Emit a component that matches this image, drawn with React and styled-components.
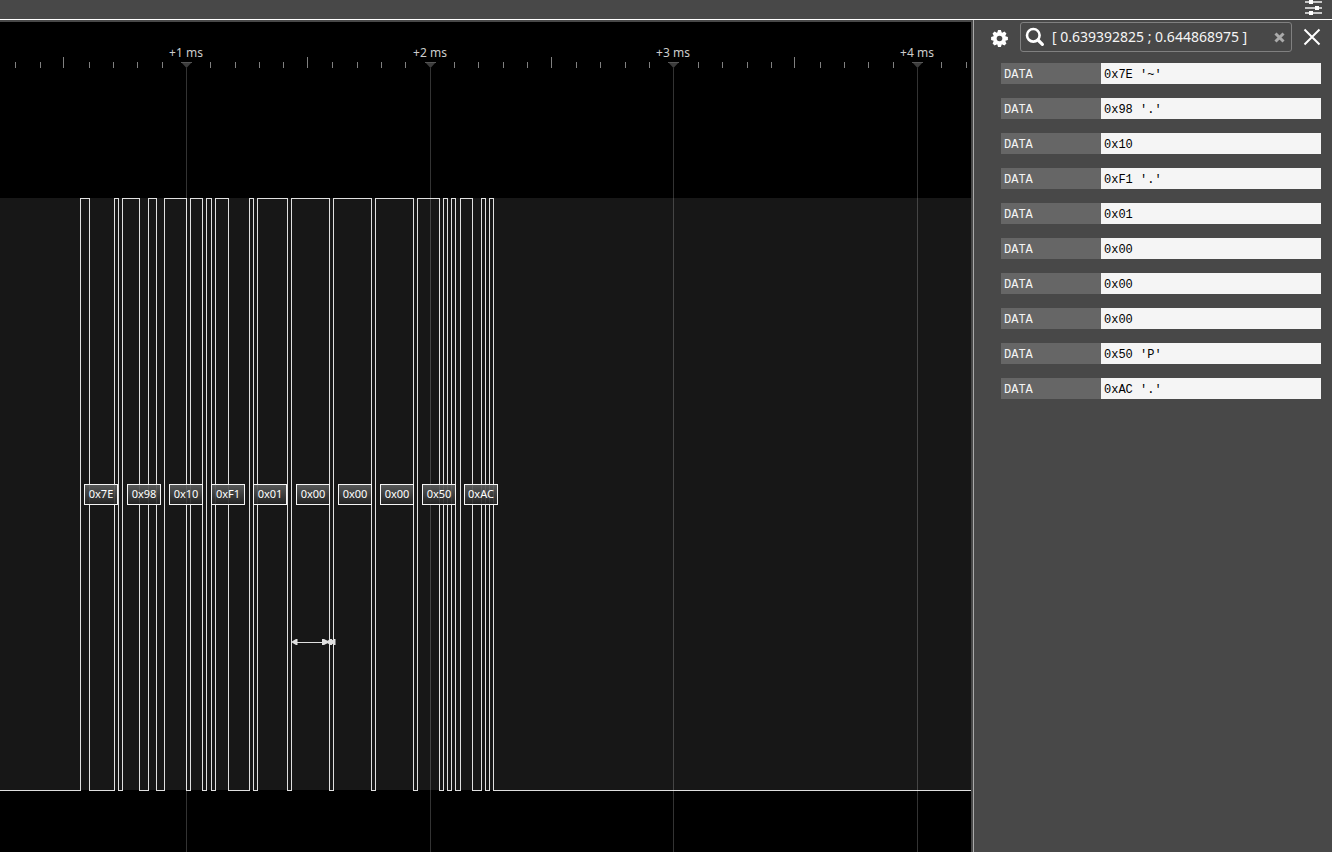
import React, { useState } from "react";
import styled, { createGlobalStyle } from "styled-components";

const GlobalStyle = createGlobalStyle`
  * {
    box-sizing: border-box;
  }

  body {
    margin: 0;
    background: #484848;
    font-family: "Noto Sans", "Open Sans", sans-serif;
    color: #f5f5f5;
  }
`;

const Page = styled.div`
  display: flex;
  flex-direction: column;
  height: 100vh;
  overflow: hidden;
`;

const TopBar = styled.header`
  display: flex;
  justify-content: flex-end;
  flex: none;
  height: 20px;
  padding-right: 9px;
  background: #484848;
  border-bottom: 1px solid #fff;
`;

const IconButton = styled.button`
  display: flex;
  align-items: center;
  justify-content: center;
  flex: none;
  width: ${(props) => props.$size}px;
  height: ${(props) => props.$size}px;
  padding: 0;
  border: none;
  background: none;
  color: ${(props) => props.$color || "#fff"};
  cursor: pointer;
`;

const Workspace = styled.div`
  display: flex;
  flex: 1;
  min-height: 0;
`;

const Chart = styled.main`
  position: relative;
  display: flex;
  flex-direction: column;
  flex: 1;
  min-width: 0;
  margin: 2px 2px 0 0;
  padding-bottom: 62px;
  background: #000;
  overflow: hidden;
`;

const Ruler = styled.svg`
  display: block;
  flex: none;
  width: 100%;
  height: 176px;
  shape-rendering: crispEdges;

  text {
    font-size: 12px;
    fill: #ccc;
    text-anchor: middle;
  }
`;

/* runs over the full height of the chart, behind the labels */
const GridLines = styled.svg`
  position: absolute;
  inset: 46px 0 0 0;
  width: 100%;
  height: 100%;
  fill: rgba(255, 255, 255, 0.2);
  pointer-events: none;
`;

const Track = styled.section`
  position: relative;
  flex: 1;
  min-height: 0;
  background: #171717;
`;

const Wave = styled.svg`
  position: absolute;
  inset: 0;
  width: 100%;
  height: 100%;
  overflow: visible;
  fill: #e0e0e0;
`;

const ByteTag = styled.span`
  position: absolute;
  z-index: 1;
  top: calc(50% - 10px);
  width: 34px;
  height: 21px;
  border: 1px solid #f5f5f5;
  background: linear-gradient(
    rgba(92, 94, 94, 0.92),
    rgba(36, 36, 36, 0.92)
  );
  font-size: 11px;
  line-height: 17px;
  text-align: center;
  color: #fff;
`;

const Panel = styled.aside`
  flex: none;
  width: 359px;
  padding: 2px 11px 0 16px;
  border-left: 1px solid #aaa;
  background: #484848;
`;

const SearchRow = styled.form`
  display: flex;
  align-items: center;
  height: 30px;
  margin: 0 -1px 11px 0;
`;

const SearchBox = styled.label`
  display: flex;
  align-items: center;
  flex: 1;
  min-width: 0;
  height: 30px;
  margin: 0 10px 0 12px;
  padding: 0 4px;
  border: 1px solid #808080;
  border-radius: 3px;
`;

const SearchInput = styled.input`
  flex: 1;
  min-width: 0;
  height: 28px;
  margin-left: 7px;
  padding: 0 0 2px;
  border: none;
  outline: none;
  background: none;
  font-family: inherit;
  font-size: 14px;
  color: #f5f5f5;
`;

const DataTable = styled.table`
  display: block;
  margin-left: 11px;
  font-family: "Liberation Mono", "Courier New", monospace;
  font-size: 12px;
  line-height: 18px;

  tbody {
    display: flex;
    flex-direction: column;
    gap: 14px;
  }

  tr {
    display: flex;
  }
`;

const NameCell = styled.th`
  width: 100px;
  padding: 3px 3px 0;
  background: #666;
  font-weight: normal;
  text-align: left;
  color: #f5f5f5;
`;

const ValueCell = styled.td`
  flex: 1;
  padding: 3px 3px 0;
  background: #f5f5f5;
  color: #000;
`;

const ORIGIN = 186;
const MINOR_STEP = 24.37;

const ticks = Array.from({ length: 46 }, (_, i) => {
  const n = i - 7;
  const half = Math.abs(n % 10) === 5;
  return {
    n,
    half,
    x: Math.round(ORIGIN + n * MINOR_STEP) - (half ? 1 : 0),
    label: n >= 0 && n % 10 === 0 ? `+${n / 10 + 1} ms` : null,
  };
});

// [rising edge, falling edge]
const pulses = [
  [80, 89],
  [114, 118],
  [122, 139],
  [148, 156],
  [164, 186],
  [190, 202],
  [206, 211],
  [215, 228],
  [249, 253],
  [257, 287],
  [291, 329],
  [333, 371],
  [375, 413],
  [417, 439],
  [443, 447],
  [451, 455],
  [460, 472],
  [481, 485],
  [489, 493],
];

const bytes = [
  { value: "0x7E", char: "'~'", x: 84 },
  { value: "0x98", char: "'.'", x: 127 },
  { value: "0x10", char: "", x: 169 },
  { value: "0xF1", char: "'.'", x: 211 },
  { value: "0x01", char: "", x: 253 },
  { value: "0x00", char: "", x: 296 },
  { value: "0x00", char: "", x: 338 },
  { value: "0x00", char: "", x: 380 },
  { value: "0x50", char: "'P'", x: 422 },
  { value: "0xAC", char: "'.'", x: 464 },
];

function SlidersIcon() {
  return (
    <svg width="18" height="18" viewBox="0 0 18 18" aria-hidden="true">
      <g fill="#c8c8c8">
        <rect x="0" y="1" width="17" height="2" />
        <rect x="0" y="7" width="17" height="2" />
        <rect x="0" y="12" width="17" height="2" />
      </g>
      <g fill="#fff">
        <rect x="4" y="0" width="4" height="4" />
        <rect x="10" y="6" width="4" height="4" />
        <rect x="4" y="11" width="4" height="4" />
      </g>
    </svg>
  );
}

function GearIcon() {
  return (
    <svg width="17" height="20" viewBox="-8.5 -11.5 17 20" aria-hidden="true">
      <g fill="#fff">
        {[0, 45, 90, 135].map((angle) => (
          <path
            key={angle}
            transform={`rotate(${angle})`}
            d="M-2.2-6 -1.4-8.4H1.4L2.2-6V6L1.4 8.4H-1.4L-2.2 6Z"
          />
        ))}
        <circle r="6.2" />
      </g>
      <circle r="2.8" fill="#484848" />
    </svg>
  );
}

function SearchIcon() {
  return (
    <svg width="20" height="20" viewBox="0 0 20 20" fill="none" stroke="#fff" aria-hidden="true">
      <circle cx="8.3" cy="8.3" r="6.3" strokeWidth="2.6" />
      <path d="M13 13 17.4 17.4" strokeWidth="3.2" strokeLinecap="round" />
    </svg>
  );
}

function CrossIcon({ size, weight }) {
  return (
    <svg
      width={size}
      height={size}
      viewBox={`0 0 ${size} ${size}`}
      stroke="currentColor"
      strokeWidth={weight}
      aria-hidden="true"
    >
      <path d={`M1.5 1.5 ${size - 1.5} ${size - 1.5}M${size - 1.5} 1.5 1.5 ${size - 1.5}`} />
    </svg>
  );
}

function TimeRuler() {
  return (
    <Ruler>
      {ticks.map(({ n, x, label, half }) =>
        label ? (
          <g key={n}>
            <text x={x} y="35">
              {label}
            </text>
            <path
              d={`M${x - 5} 40H${x + 6}L${x + 0.5} 46Z`}
              fill="#3c3c3c"
              shapeRendering="auto"
            />
            <rect x={x - 5} y="40" width="11" height="1" fill="#555" />
          </g>
        ) : (
          <rect
            key={n}
            x={x}
            y={half ? 35 : 40}
            width="1"
            height={half ? 11 : 6}
            fill="#808080"
          />
        )
      )}
    </Ruler>
  );
}

function Waveform() {
  const last = pulses.length - 1;

  return (
    <Wave>
      {pulses.map(([rise, fall], i) => (
        <g key={rise}>
          <rect x={rise} y="0" width="1" height="100%" />
          <rect x={fall} y="0" width="1" height="100%" />
          <rect x={rise} y="0" width={fall - rise + 1} height="1" />
          <rect
            x={fall}
            y="100%"
            width={i === last ? "100%" : pulses[i + 1][0] - fall + 1}
            height="1"
          />
        </g>
      ))}
      <rect x="0" y="100%" width={pulses[0][0] + 1} height="1" />

      {/* measured pulse and gap */}
      <svg x="291" y="75%" overflow="visible">
        <rect x="2" y="0" width="41" height="1" />
        <path d="M0 0 5-3H6.5V3H5Z" />
        <path d="M39 0 33-3H31V3H33Z" />
        <path d="M35 0 39-3H41V3H39Z" />
        <path d="M38 0 43-3H44.5V3H43Z" />
      </svg>
    </Wave>
  );
}

function App() {
  const [range, setRange] = useState("[ 0.639392825 ; 0.644868975 ]");

  return (
    <>
      <GlobalStyle />
      <Page>
        <TopBar>
          <IconButton $size={18} type="button" aria-label="Options">
            <SlidersIcon />
          </IconButton>
        </TopBar>
        <Workspace>
          <Chart>
            <TimeRuler />
            <Track>
              <Waveform />
              {bytes.map((byte) => (
                <ByteTag key={byte.x} style={{ left: byte.x }}>
                  {byte.value}
                </ByteTag>
              ))}
            </Track>
            <GridLines>
              {ticks
                .filter((tick) => tick.label)
                .map((tick) => (
                  <rect key={tick.n} x={tick.x} y="0" width="1" height="100%" />
                ))}
            </GridLines>
          </Chart>
          <Panel>
            <SearchRow onSubmit={(e) => e.preventDefault()}>
              <IconButton $size={18} type="button" aria-label="Settings">
                <GearIcon />
              </IconButton>
              <SearchBox htmlFor="range">
                <SearchIcon />
                <SearchInput
                  id="range"
                  aria-label="Search"
                  value={range}
                  onChange={(e) => setRange(e.target.value)}
                />
                <IconButton
                  $size={16}
                  $color="#aaa"
                  type="button"
                  aria-label="Clear"
                  onClick={() => setRange("")}
                >
                  <CrossIcon size={11} weight={3} />
                </IconButton>
              </SearchBox>
              <IconButton $size={20} type="button" aria-label="Close">
                <CrossIcon size={18} weight={2} />
              </IconButton>
            </SearchRow>
            <DataTable>
              <tbody>
                {bytes.map((byte) => (
                  <tr key={byte.x}>
                    <NameCell scope="row">DATA</NameCell>
                    <ValueCell>
                      {byte.value} {byte.char}
                    </ValueCell>
                  </tr>
                ))}
              </tbody>
            </DataTable>
          </Panel>
        </Workspace>
      </Page>
    </>
  );
}

export default App;
